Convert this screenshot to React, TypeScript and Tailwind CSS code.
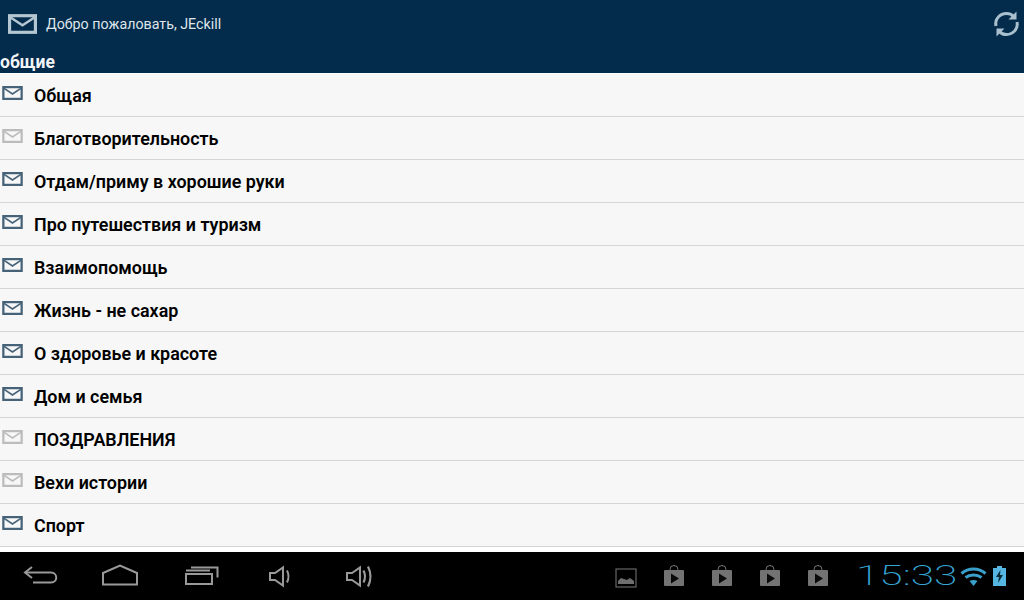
const rows = [
  { title: "Общая", read: false },
  { title: "Благотворительность", read: true },
  { title: "Отдам/приму в хорошие руки", read: false },
  { title: "Про путешествия и туризм", read: false },
  { title: "Взаимопомощь", read: false },
  { title: "Жизнь - не сахар", read: false },
  { title: "О здоровье и красоте", read: false },
  { title: "Дом и семья", read: false },
  { title: "ПОЗДРАВЛЕНИЯ", read: true },
  { title: "Вехи истории", read: true },
  { title: "Спорт", read: false },
]

function Envelope({ className }: { className: string }) {
  return (
    <svg viewBox="0 0 22 15" className={className} fill="none" stroke="currentColor" strokeWidth="2.400">
      <rect x="1.200" y="1.200" width="19.600" height="12.600" />
      <path d="M2 2.500l9 6 9-6" strokeWidth="1.800" />
    </svg>
  )
}

function NavIcon({ w, children }: { w: number; children: React.ReactNode }) {
  return (
    <svg width={w} height="30" viewBox={`0 0 ${w} 30`} fill="none" stroke="#999" strokeWidth="2" className="shrink-0">
      {children}
    </svg>
  )
}

function PlayBag() {
  return (
    <svg width="22" height="22" viewBox="0 0 22 22" className="shrink-0">
      <path d="M7 6V4.500a4 4 0 0 1 8 0V6" fill="none" stroke="#777" strokeWidth="1" />
      <rect x="1" y="5" width="20" height="16" rx="1" fill="#737373" />
      <path d="M8 8.500l8 5-8 5z" fill="#0a0a0a" />
    </svg>
  )
}

export default function App() {
  return (
    <div className="w-[1024px] h-[600px] overflow-hidden flex flex-col bg-[#f6f6f6] font-['Roboto',sans-serif]">
      <header className="h-[73px] shrink-0 bg-[#022b4c] flex flex-col">
        <div className="h-[51px] flex items-center justify-between pl-2 pr-[4px]">
          <div className="flex items-center gap-[9px] -mt-[3px]">
            <Envelope className="w-[29px] h-[20px] text-[#b4c6d2]" />
            <span className="text-[14.250px] text-[#dfe6ea] leading-5">Добро пожаловать, JEckill</span>
          </div>
          <svg width="27" height="28" viewBox="0 0 27 28" fill="none" stroke="#a9bfce" strokeWidth="3" className="-mt-[3px]">
            <path d="M3 16C1.500 9 7 3.500 13.500 3.500c3 0 5.500 1 7 3" />
            <path d="M24 12c1.500 7-4 12.500-10.500 12.500-3 0-5.500-1-7-3" />
            <path d="M23.500 1.500v8h-8z" fill="#a9bfce" stroke="none" />
            <path d="M3.500 26.500v-8h8z" fill="#a9bfce" stroke="none" />
          </svg>
        </div>
        <div className="text-[17.500px] leading-5 font-bold text-[#f2f5f7] mt-[1px]">общие</div>
      </header>

      <main className="flex-1 min-h-0 flex flex-col pt-px bg-white">
        {rows.map((row) => (
          <div key={row.title} className="h-[43px] shrink-0 border-b border-[#d6d6d6] bg-[#f7f7f7] relative flex items-center pl-[34px]">
            <Envelope
              className={`absolute left-[2px] top-[12px] w-[21px] h-[14px] ${row.read ? "text-[#bcbcbc]" : "text-[#456278]"}`}
            />
            <span className="text-[17.900px] font-semibold text-black leading-6 mt-[2px]">{row.title}</span>
          </div>
        ))}
      </main>

      <footer className="h-[48px] shrink-0 bg-black flex items-center relative">
        <div className="flex items-center">
          <div className="ml-[23px]">
            <NavIcon w={36}>
              <path d="M9 6L2 11.500l7 5.500" />
              <path d="M2 11.500h26c7 0 7 10 0 10H10" />
            </NavIcon>
          </div>
          <div className="ml-[42px]">
            <NavIcon w={38}>
              <path d="M2 23.500V12L19 4.500 36 12v11.500z" />
            </NavIcon>
          </div>
          <div className="ml-[45px]">
            <NavIcon w={36}>
              <path d="M2 13h26v10H2z" />
              <path d="M2 9.500h24M7 6.500h26.500v10" />
            </NavIcon>
          </div>
          <div className="ml-[48px]">
            <NavIcon w={24}>
              <path d="M2 12h5l8-5.500v18L7 19H2z" />
              <path d="M19 9.500c2 4 2 8 0 12" />
            </NavIcon>
          </div>
          <div className="ml-[53px]">
            <NavIcon w={30}>
              <path d="M2 12h5l8-5.500v18L7 19H2z" />
              <path d="M18.500 9.500c2 4 2 8 0 12M23 5.500c3.500 7 3.500 13 0 20" strokeWidth="2.200" />
            </NavIcon>
          </div>
        </div>

        <div className="ml-auto flex items-center">
          <svg width="22" height="20" viewBox="0 0 22 20" className="shrink-0 mt-[3px]">
            <rect x="1" y="1" width="20" height="18" fill="none" stroke="#666" strokeWidth="1.200" />
            <path d="M3 16v-3l3-3 3 1 3 1 3-2 4 3v3z" fill="#6e6e6e" />
          </svg>
          <div className="flex items-center gap-[26px] ml-[26px]">
            <PlayBag />
            <PlayBag />
            <PlayBag />
            <PlayBag />
          </div>
          <div className="w-[101px] ml-[27px] text-[27px] leading-none font-extralight text-[#35a5d5] scale-x-[1.570] origin-left">
            15:33
          </div>
          <svg width="27" height="21" viewBox="0 0 27 21" fill="none" stroke="#39a0cc" strokeWidth="3" className="shrink-0 ml-[3px]">
            <path d="M1.500 7.500c7-6 17-6 24 0" />
            <path d="M5.500 11.500c4.500-3.500 11.500-3.500 16 0" />
            <path d="M13.500 20L9.500 15c2.500-1.500 5.500-1.500 8 0z" fill="#39a0cc" stroke="none" />
          </svg>
          <svg width="15" height="20" viewBox="0 0 15 20" className="shrink-0 ml-[5px] mr-[17px]">
            <path d="M5 0h5v2h4v18H1V2h4z" fill="#56b6e2" />
            <path d="M8.500 4L4 11h3l-1 6 5-8H8z" fill="#0b2a3a" />
          </svg>
        </div>
      </footer>
    </div>
  )
}
